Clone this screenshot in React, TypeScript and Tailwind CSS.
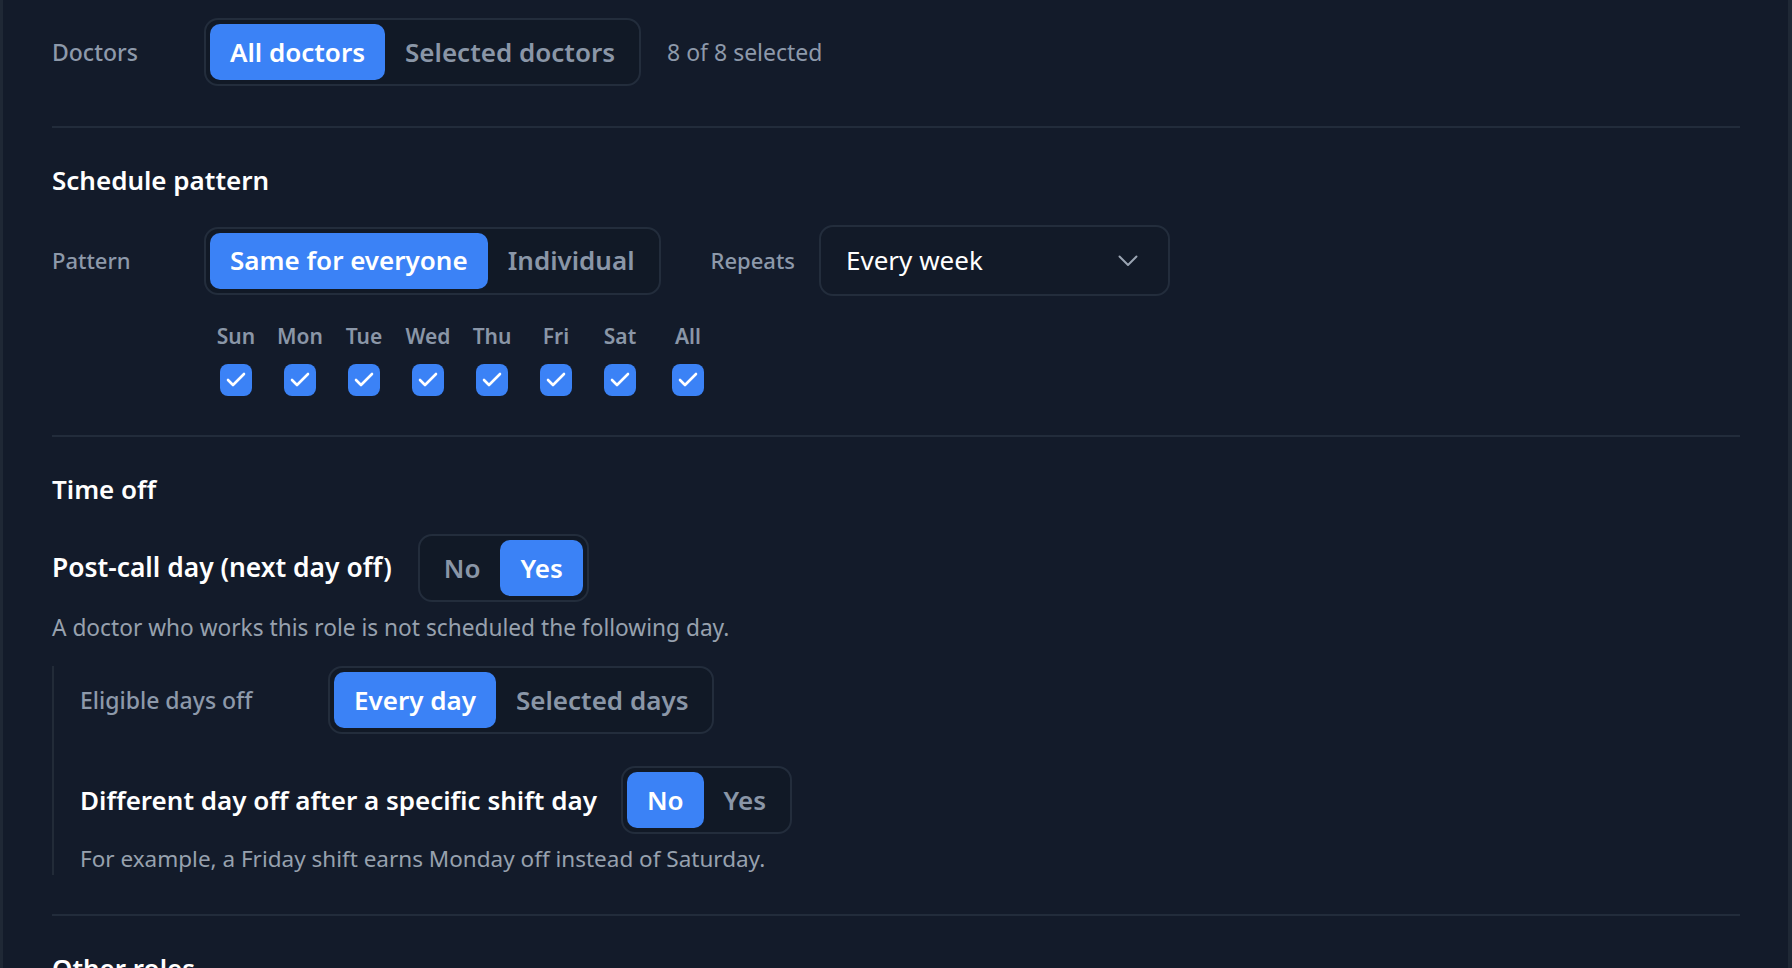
import { Check } from "lucide-react"

type Opt = { label: string; active?: boolean }

function Segmented({ options }: { options: Opt[] }) {
  return (
    <div className="flex shrink-0 rounded-[14px] border-2 border-[#232d3c] bg-[#111926] p-1">
      {options.map((o) =>
        o.active ? (
          <div
            key={o.label}
            className="flex h-14 items-center rounded-[10px] bg-[#3b82f6] px-5 text-[26px] font-semibold text-white"
          >
            {o.label}
          </div>
        ) : (
          <div
            key={o.label}
            className="flex h-14 items-center rounded-[10px] px-5 text-[26px] font-semibold text-[#8a96a7]"
          >
            {o.label}
          </div>
        )
      )}
    </div>
  )
}

const days = ["Sun", "Mon", "Tue", "Wed", "Thu", "Fri", "Sat"]

function DayBox({ label, extra }: { label: string; extra?: boolean }) {
  return (
    <div className={extra ? "ml-1 flex w-16 flex-col items-center gap-[13px]" : "flex w-16 flex-col items-center gap-[13px]"}>
      <span className="text-[21px] font-semibold leading-[30px] text-[#8a96a7]">{label}</span>
      <span className="flex h-8 w-8 items-center justify-center rounded-lg bg-[#3b82f6] text-white">
        <Check size={24} strokeWidth={2.6} />
      </span>
    </div>
  )
}

export default function App() {
  return (
    <div className="min-h-screen border-l-[3px] border-r-4 border-[#1f2835] bg-[#131b2a] font-['Noto_Sans',sans-serif] text-[#f3f4f6]">
      <div className="pl-[49px] pr-12">
        {/* doctors */}
        <div className="flex items-center pb-10 pt-[18px]">
          <span className="w-[152px] shrink-0 text-[23px] font-medium text-[#8d99aa]">Doctors</span>
          <Segmented options={[{ label: "All doctors", active: true }, { label: "Selected doctors" }]} />
          <span className="ml-[26px] text-[23px] text-[#8d99aa]">8 of 8 selected</span>
        </div>
        <div className="h-[2px] bg-[#222c3b]" />

        {/* schedule pattern */}
        <div className="pb-[39px] pt-[35px]">
          <h2 className="text-[26px] font-semibold leading-[34px] text-white">Schedule pattern</h2>
          <div className="mt-[28px] flex items-center">
            <span className="w-[152px] shrink-0 text-[22px] font-medium text-[#8d99aa]">Pattern</span>
            <Segmented options={[{ label: "Same for everyone", active: true }, { label: "Individual" }]} />
            <span className="ml-[50px] text-[22px] font-medium text-[#8d99aa]">Repeats</span>
            <div className="ml-6 flex h-[71px] w-[351px] items-center justify-between rounded-[14px] border-2 border-[#232d3c] bg-[#121a28] pl-[25px] pr-[30px]">
              <span className="text-[26px] text-white">Every week</span>
              <svg width="20" height="12" viewBox="0 0 20 12" fill="none" stroke="#9aa4b2" strokeWidth="2" strokeLinecap="round" strokeLinejoin="round">
                <polyline points="1.5 1.5 10 10 18.5 1.5" />
              </svg>
            </div>
          </div>
          <div className="mt-[25px] flex pl-[152px]">
            {days.map((d) => (
              <DayBox key={d} label={d} />
            ))}
            <DayBox label="All" extra />
          </div>
        </div>
        <div className="h-[2px] bg-[#222c3b]" />

        {/* time off */}
        <div className="pb-[39px] pt-[35px]">
          <h2 className="text-[26px] font-semibold leading-[34px] text-white">Time off</h2>
          <div className="mt-[28px] flex items-center gap-[26px]">
            <span className="text-[26.4px] font-semibold text-white">Post-call day (next day off)</span>
            <Segmented options={[{ label: "No" }, { label: "Yes", active: true }]} />
          </div>
          <p className="mt-[10px] text-[22.7px] leading-8 text-[#97a1ae]">
            A doctor who works this role is not scheduled the following day.
          </p>
          <div className="mt-[22px] border-l-2 border-[#222b38] pl-[26px]">
            <div className="flex items-center">
              <span className="w-[248px] shrink-0 text-[23px] font-medium text-[#8d99aa]">Eligible days off</span>
              <Segmented options={[{ label: "Every day", active: true }, { label: "Selected days" }]} />
            </div>
            <div className="mt-[32px] flex items-center gap-6">
              <span className="text-[26px] font-semibold text-white">Different day off after a specific shift day</span>
              <Segmented options={[{ label: "No", active: true }, { label: "Yes" }]} />
            </div>
            <p className="mt-[9px] text-[22.5px] leading-8 text-[#97a1ae]">
              For example, a Friday shift earns Monday off instead of Saturday.
            </p>
          </div>
        </div>
        <div className="h-[2px] bg-[#222c3b]" />

        {/* other roles */}
        <div className="pb-10 pt-[35px]">
          <h2 className="text-[26px] font-semibold leading-[34px] text-white">Other roles</h2>
        </div>
      </div>
    </div>
  )
}
